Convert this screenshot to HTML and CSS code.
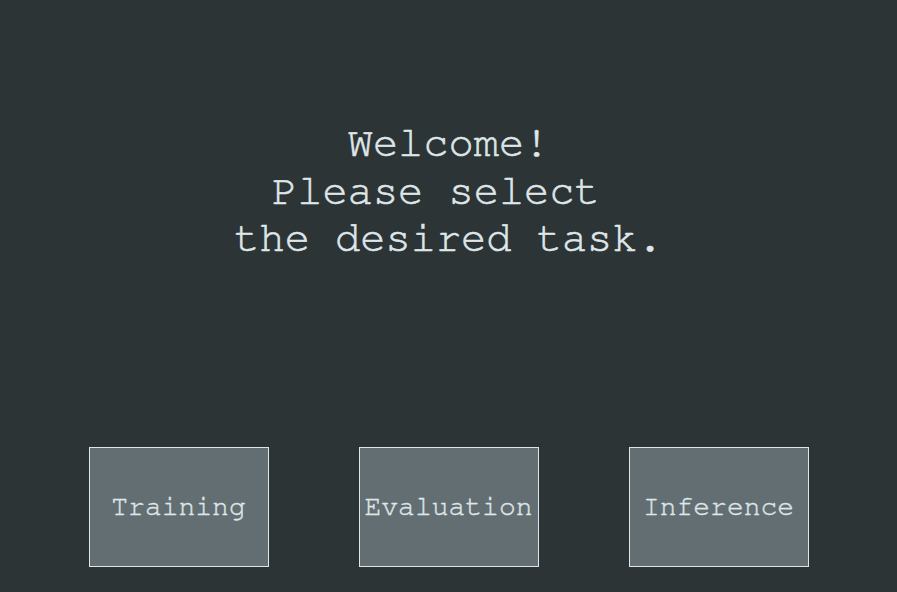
FILE: index.html
```html
<!DOCTYPE html>
<html>
<head>
<meta charset="utf-8">
<link rel="stylesheet" href="styles.css">
</head>
<body>
<main class="screen">
<h1 class="title">Welcome!
Please select 
the desired task.</h1>
<div class="tasks">
<button class="task">Training</button>
<button class="task">Evaluation</button>
<button class="task">Inference</button>
</div>
</main>
</body>
</html>
```
FILE: styles.css
```css
html, body {
  margin: 0;
  padding: 0;
  background: #2d3436;
}
.screen {
  width: 897px;
  height: 592px;
  display: flex;
  flex-direction: column;
  align-items: center;
  font-family: "FreeMono", "Liberation Mono", monospace;
  color: #dfe6e9;
}
.title {
  margin: 120px 0 0;
  font-size: 42px;
  font-weight: normal;
  line-height: 47.5px;
  text-align: center;
  white-space: pre;
  -webkit-text-stroke: 0.6px #dfe6e9;
}
.tasks {
  margin-top: 184.5px;
  display: flex;
  gap: 90px;
  justify-content: center;
}
.task {
  box-sizing: border-box;
  width: 180px;
  height: 120px;
  padding: 0;
  background: #636e72;
  border: 1px solid #dfe6e9;
  color: #dfe6e9;
  font-family: "FreeMono", "Liberation Mono", monospace;
  font-size: 28px;
  line-height: normal;
  -webkit-text-stroke: 0.4px #dfe6e9;
}
```
